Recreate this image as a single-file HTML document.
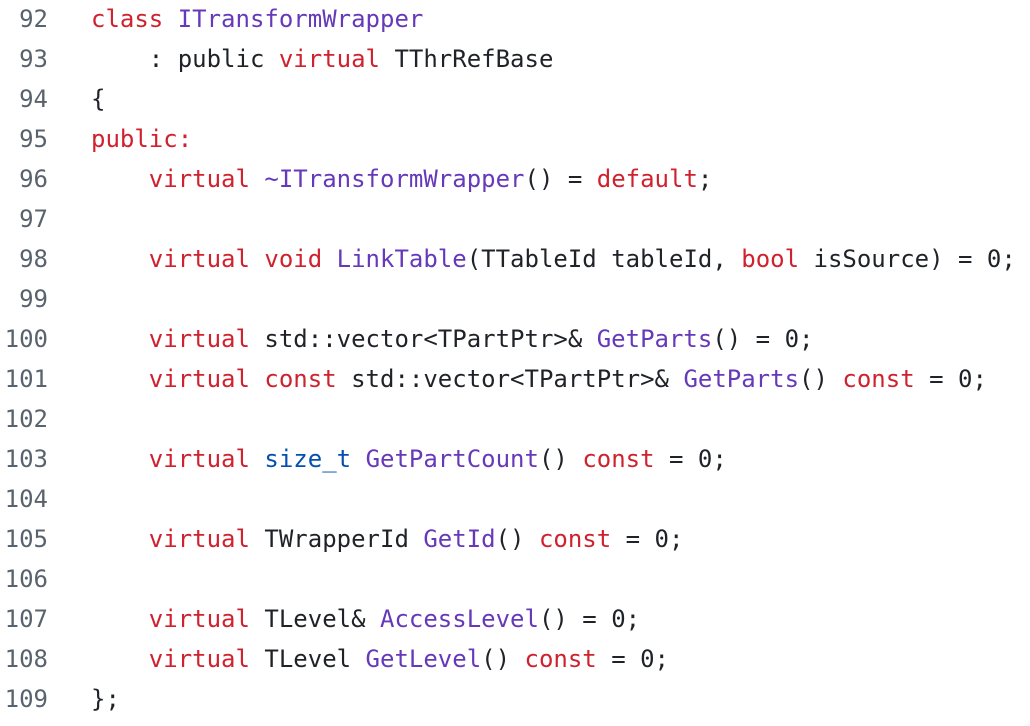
<!DOCTYPE html>
<html><head><meta charset="utf-8"><style>
html,body{margin:0;padding:0;background:#fff;width:1030px;height:726px;overflow:hidden}
.w{position:absolute;top:-1px;left:0;font-family:"DejaVu Sans Mono","Liberation Mono",monospace;font-size:24px;line-height:40px;color:#1f2328}
.l{display:flex;white-space:pre;height:40px}
.n{width:48px;text-align:right;color:#59636e;margin-right:43px}
.k{color:#cf222e}.f{color:#6639ba}.t{color:#0550ae}
</style></head><body><div class="w">
<div class="l"><span class="n">92</span><span><span class="k">class</span> <span class="f">ITransformWrapper</span></span></div>
<div class="l"><span class="n">93</span><span>    : public <span class="k">virtual</span> TThrRefBase</span></div>
<div class="l"><span class="n">94</span><span>{</span></div>
<div class="l"><span class="n">95</span><span><span class="k">public:</span></span></div>
<div class="l"><span class="n">96</span><span>    <span class="k">virtual</span> <span class="f">~ITransformWrapper</span>() = <span class="k">default</span>;</span></div>
<div class="l"><span class="n">97</span><span></span></div>
<div class="l"><span class="n">98</span><span>    <span class="k">virtual</span> <span class="k">void</span> <span class="f">LinkTable</span>(TTableId tableId, <span class="k">bool</span> isSource) = 0;</span></div>
<div class="l"><span class="n">99</span><span></span></div>
<div class="l"><span class="n">100</span><span>    <span class="k">virtual</span> std::vector&lt;TPartPtr&gt;&amp; <span class="f">GetParts</span>() = 0;</span></div>
<div class="l"><span class="n">101</span><span>    <span class="k">virtual</span> <span class="k">const</span> std::vector&lt;TPartPtr&gt;&amp; <span class="f">GetParts</span>() <span class="k">const</span> = 0;</span></div>
<div class="l"><span class="n">102</span><span></span></div>
<div class="l"><span class="n">103</span><span>    <span class="k">virtual</span> <span class="t">size_t</span> <span class="f">GetPartCount</span>() <span class="k">const</span> = 0;</span></div>
<div class="l"><span class="n">104</span><span></span></div>
<div class="l"><span class="n">105</span><span>    <span class="k">virtual</span> TWrapperId <span class="f">GetId</span>() <span class="k">const</span> = 0;</span></div>
<div class="l"><span class="n">106</span><span></span></div>
<div class="l"><span class="n">107</span><span>    <span class="k">virtual</span> TLevel&amp; <span class="f">AccessLevel</span>() = 0;</span></div>
<div class="l"><span class="n">108</span><span>    <span class="k">virtual</span> TLevel <span class="f">GetLevel</span>() <span class="k">const</span> = 0;</span></div>
<div class="l"><span class="n">109</span><span>};</span></div>
</div></body></html>
